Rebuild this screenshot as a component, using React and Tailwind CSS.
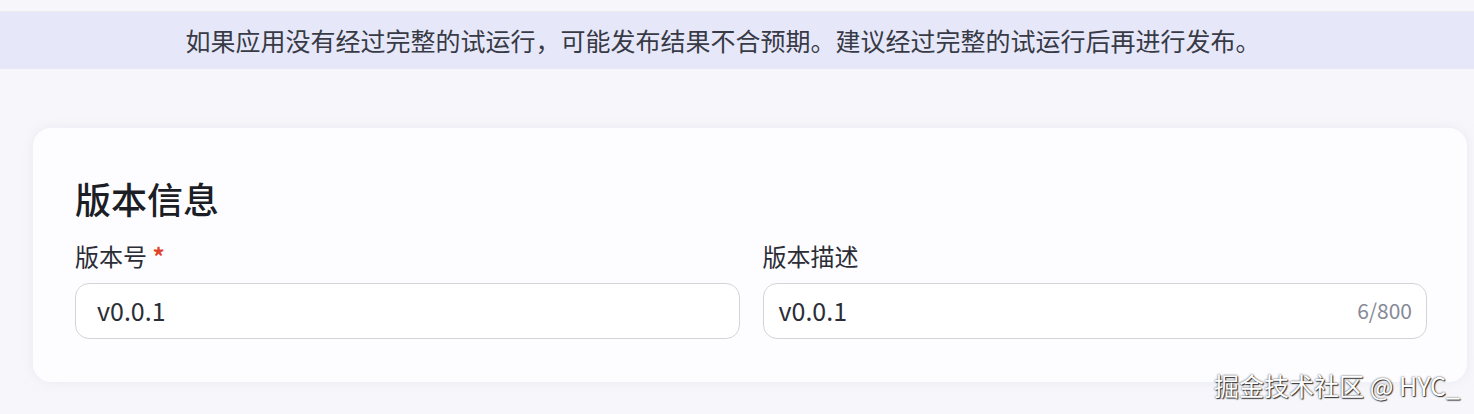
export default function App() {
  return (
    <div
      className="relative h-[414px] w-[1474px] overflow-hidden bg-[#f7f7fb]"
      style={{ fontFamily: '"Noto Sans CJK SC", "Noto Sans", sans-serif' }}
    >
      <div className="h-[11px]" />
      <div className="flex h-[58px] items-center justify-center border-t border-[#ebebf2] bg-[#e6e8fa] pr-[28px] text-[25px] text-[#383a45]">
        如果应用没有经过完整的试运行，可能发布结果不合预期。建议经过完整的试运行后再进行发布。
      </div>

      <div className="ml-[33px] mr-[7px] mt-[59px] rounded-[18px] bg-[#fdfdff] pb-[43px] pl-[42px] pr-[40px] pt-[44px] shadow-[0_0_12px_rgba(220,220,235,0.5)]">
        <h2 className="text-[36px] font-medium leading-[52px] text-[#1c1e26]">版本信息</h2>
        <div className="mt-[15px] flex gap-[23px]">
          <div className="flex-1">
            <div className="text-[24px] leading-[34px] text-[#2b2d36]">
              版本号 <span className="font-bold text-[#e0452a]">*</span>
            </div>
            <div className="mt-[10px] flex h-[56px] items-center rounded-[14px] border border-[#d3d3da] bg-white px-[21px] text-[25px] text-[#2b2d36]">
              v0.0.1
            </div>
          </div>
          <div className="flex-1">
            <div className="text-[24px] leading-[34px] text-[#2b2d36]">版本描述</div>
            <div className="mt-[10px] flex h-[56px] items-center justify-between rounded-[14px] border border-[#d3d3da] bg-white pl-[15px] pr-[14px] text-[25px] text-[#2b2d36]">
              <span>v0.0.1</span>
              <span className="text-[21px] text-[#878996]">6/800</span>
            </div>
          </div>
        </div>
      </div>

      <div
        className="absolute bottom-[16px] right-[14px] text-[25px] leading-none text-white"
        style={{ textShadow: '0 0 2px #333, 1px 1px 1px #333' }}
      >
        掘金技术社区 @ HYC_
      </div>
    </div>
  );
}
